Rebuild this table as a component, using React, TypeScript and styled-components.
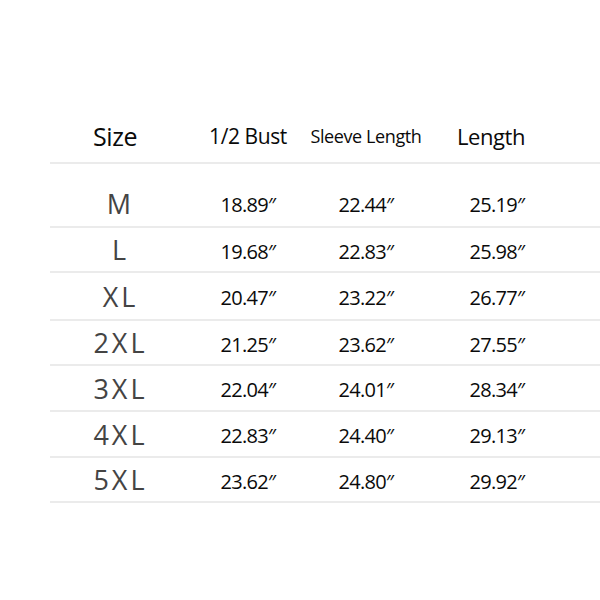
import React from "react";
import styled, { createGlobalStyle } from "styled-components";

const GlobalStyle = createGlobalStyle`
  html, body {
    margin: 0;
    padding: 0;
    background: #ffffff;
  }
  body {
    font-family: "Open Sans", "Liberation Sans", sans-serif;
  }
`;

const Page = styled.div`
  width: 600px;
  height: 600px;
  padding-top: 110px;
  padding-left: 50px;
  box-sizing: border-box;
  background: #fff;
`;

const Row = styled.div<{ $height: number; $offset?: number }>`
  display: grid;
  grid-template-columns: 138px 120px 116px 146px 1fr;
  align-items: center;
  height: ${(p) => p.$height}px;
  padding-top: ${(p) => p.$offset ?? 0}px;
  box-sizing: border-box;
  border-bottom: 2px solid #ebebeb;
`;

const HeadCell = styled.div<{ $size: number; $shift?: number }>`
  text-align: center;
  font-size: ${(p) => p.$size}px;
  font-weight: 500;
  color: #0a0a0a;
  letter-spacing: -0.4px;
  padding-right: ${(p) => p.$shift ?? 0}px;
`;

const SizeCell = styled.div`
  text-align: center;
  font-size: 27px;
  font-weight: 400;
  color: #444;
  letter-spacing: 3px;
  padding-left: 3px;
`;

const ValueCell = styled.div`
  text-align: center;
  font-size: 20px;
  font-weight: 500;
  color: #0a0a0a;
  letter-spacing: -0.7px;
  padding-top: 3px;
`;

const rows = [
  ["M", "18.89″", "22.44″", "25.19″"],
  ["L", "19.68″", "22.83″", "25.98″"],
  ["XL", "20.47″", "23.22″", "26.77″"],
  ["2XL", "21.25″", "23.62″", "27.55″"],
  ["3XL", "22.04″", "24.01″", "28.34″"],
  ["4XL", "22.83″", "24.40″", "29.13″"],
  ["5XL", "23.62″", "24.80″", "29.92″"],
];

const heights = [64, 45, 48, 45, 46, 46, 45];

export default function App() {
  return (
    <Page>
      <GlobalStyle />
      <Row $height={54}>
        <HeadCell $size={25} $shift={8}>Size</HeadCell>
        <HeadCell $size={21}>1/2 Bust</HeadCell>
        <HeadCell $size={18}>Sleeve Length</HeadCell>
        <HeadCell $size={22} $shift={12}>Length</HeadCell>
      </Row>
      {rows.map((r, i) => (
        <Row key={r[0]} $height={heights[i]} $offset={i === 0 ? 16 : 0}>
          <SizeCell>{r[0]}</SizeCell>
          <ValueCell>{r[1]}</ValueCell>
          <ValueCell>{r[2]}</ValueCell>
          <ValueCell>{r[3]}</ValueCell>
        </Row>
      ))}
    </Page>
  );
}
